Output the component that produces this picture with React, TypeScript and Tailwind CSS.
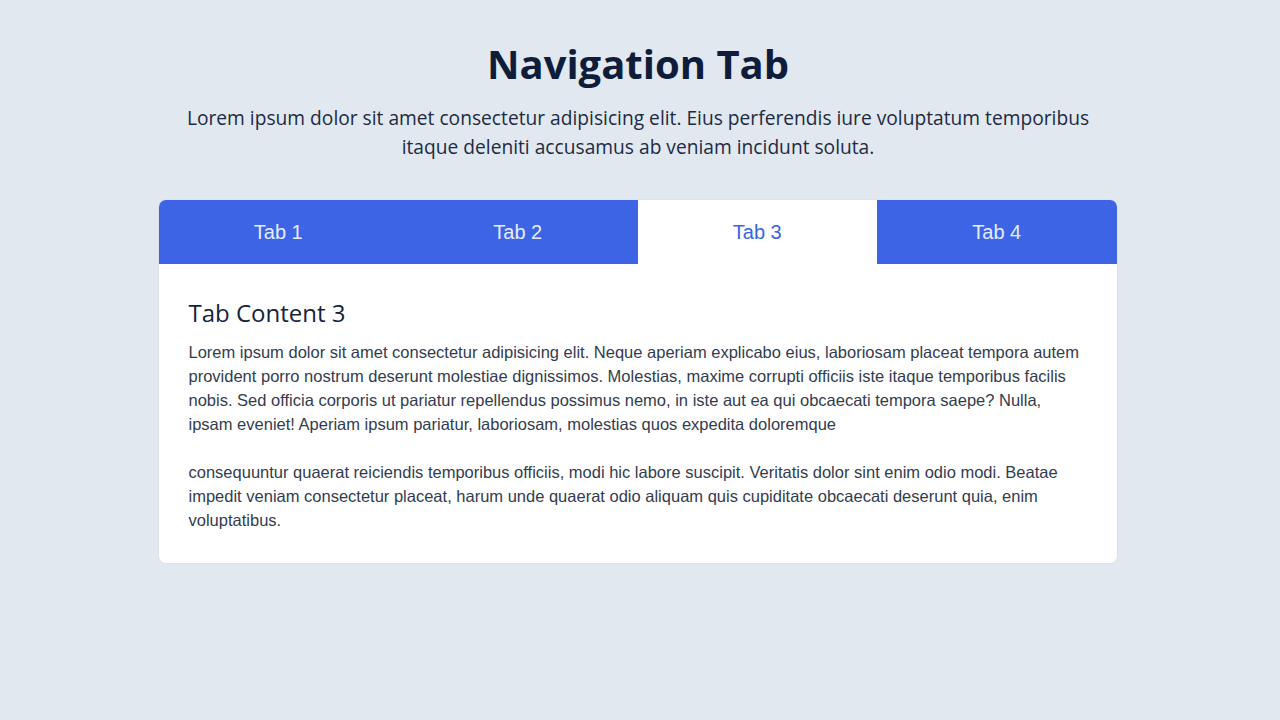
import { useState } from "react";

const tabs = ["Tab 1", "Tab 2", "Tab 3", "Tab 4"];

const App = () => {
  const [active, setActive] = useState(2);

  return (
    <div className="min-h-screen bg-[#e1e8ef] pt-[38px] pr-[4px] font-['Liberation_Sans',Arial,sans-serif]">
      <div className="text-center font-['Open_Sans',sans-serif] text-[#0f1d3a]">
        <h1 className="text-[40px] leading-[52px] font-bold">
          Navigation Tab
        </h1>
        <p className="mx-auto mt-[13px] w-[920px] text-[19.2px] leading-[29px] text-[#1e2a44]">
          Lorem ipsum dolor sit amet consectetur adipisicing elit. Eius
          perferendis iure voluptatum temporibus itaque deleniti accusamus ab
          veniam incidunt soluta.
        </p>
      </div>

      <div className="pr-[1px]">
        <div className="mx-auto mt-[38px] w-[960px] overflow-hidden rounded-lg border border-[#dbe2ea] bg-white">
          <div className="flex">
            {tabs.map((t, i) => (
              <button
                key={t}
                onClick={() => setActive(i)}
                className={
                  i === active
                    ? "h-16 flex-1 bg-white text-[20px] text-[#3b64e5]"
                    : "h-16 flex-1 bg-[#3c64e5] text-[20px] text-[#e6ecff]"
                }
              >
                {t}
              </button>
            ))}
          </div>

          <div className="px-[30px] pt-[33px] pb-[31px] text-[#333c4f]">
            <h2 className="font-['Open_Sans',sans-serif] text-[24px] leading-[32px] text-[#17233d]">
              Tab Content {active + 1}
            </h2>
            <p className="mt-[11px] text-[16.5px] leading-[24px]">
              Lorem ipsum dolor sit amet consectetur adipisicing elit. Neque
              aperiam explicabo eius, laboriosam placeat tempora autem
              provident porro nostrum deserunt molestiae dignissimos.
              Molestias, maxime corrupti officiis iste itaque temporibus
              facilis nobis. Sed officia corporis ut pariatur repellendus
              possimus nemo, in iste aut ea qui obcaecati tempora saepe? Nulla,
              ipsam eveniet! Aperiam ipsum pariatur, laboriosam, molestias quos
              expedita doloremque
            </p>
            <p className="mt-[24px] text-[16.5px] leading-[24px]">
              consequuntur quaerat reiciendis temporibus officiis, modi hic
              labore suscipit. Veritatis dolor sint enim odio modi. Beatae
              impedit veniam consectetur placeat, harum unde quaerat odio
              aliquam quis cupiditate obcaecati deserunt quia, enim
              voluptatibus.
            </p>
          </div>
        </div>
      </div>
    </div>
  );
};

export default App;
